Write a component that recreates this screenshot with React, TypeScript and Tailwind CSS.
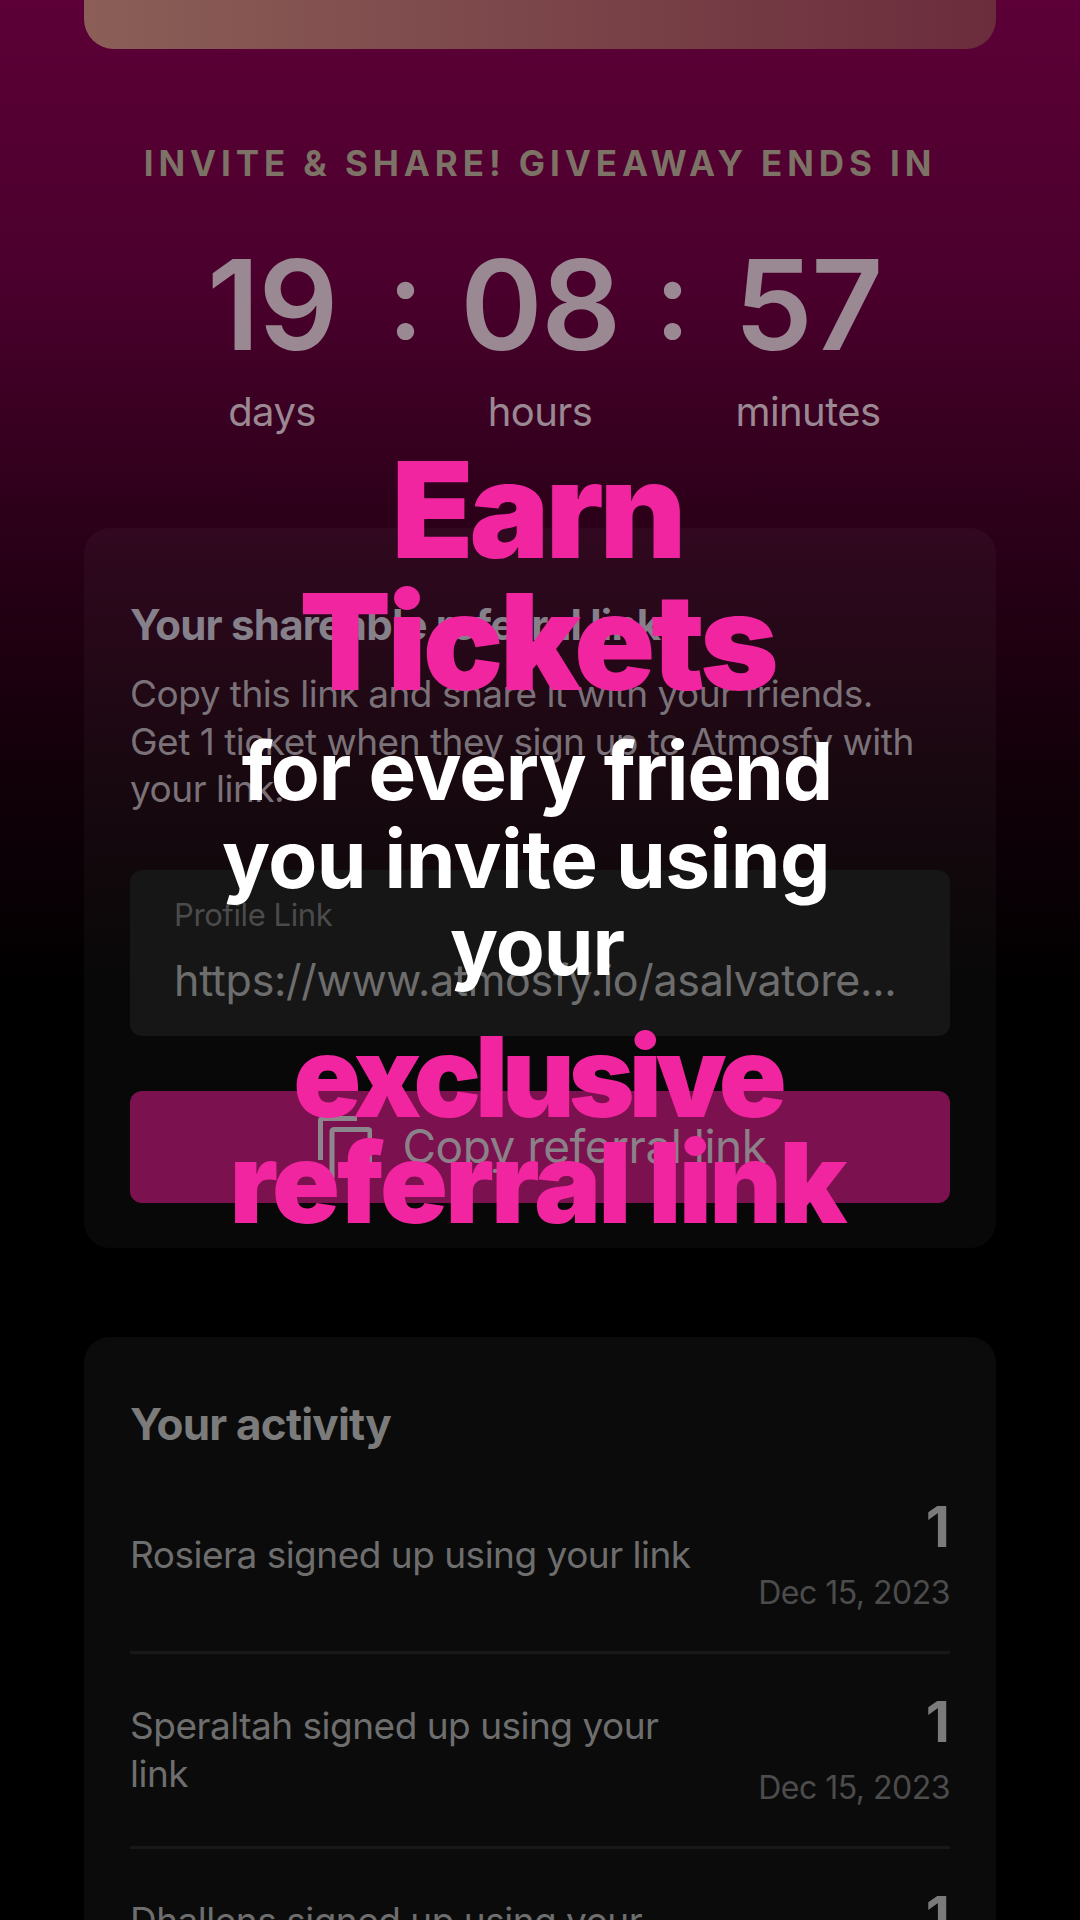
const activity = [
  { text: "Rosiera signed up using your link", date: "Dec 15, 2023" },
  { text: "Speraltah signed up using your link", date: "Dec 15, 2023" },
  { text: "Dhallens signed up using your link", date: "Dec 15, 2023" },
];

function Count({ value, label }: { value: string; label: string }) {
  return (
    <div className="flex w-[268px] flex-col items-center">
      <span className="h-[150px] text-[125px] leading-[150px] font-semibold tracking-[-1.5px] text-[#9a8893]">{value}</span>
      <span className="mt-[9px] text-[40px] leading-[46px] tracking-[-0.6px] text-[#9a8893]">{label}</span>
    </div>
  );
}

function CopyIcon() {
  return (
    <svg width="54" height="62" viewBox="0 0 54 62" fill="none" stroke="#8b878c" strokeWidth="5">
      <path d="M2.5 44V4.5a2 2 0 0 1 2-2H39" />
      <path d="M14 62V15.5a2 2 0 0 1 2-2h34a2 2 0 0 1 2 2V62" />
    </svg>
  );
}

export default function App() {
  return (
    <div className="relative h-[1920px] w-[1080px] overflow-hidden bg-[linear-gradient(180deg,#5c0037_0%,#4a002c_15%,#2c0019_27%,#120009_40%,#000000_52%)] font-['Inter',sans-serif]">
      <div className="mx-[84px] h-[49px] rounded-b-[30px] bg-[linear-gradient(90deg,#8b5f57,#6b2c3c)]" />

      <div className="mt-[94px] text-center text-[35px] leading-[40px] font-bold tracking-[4.9px] text-[#7d7266]">INVITE &amp; SHARE! GIVEAWAY ENDS IN</div>

      <div className="relative mx-auto mt-[47px] flex w-[804px] justify-center">
        <Count value="19" label="days" />
        <Count value="08" label="hours" />
        <Count value="57" label="minutes" />
        <span className="absolute top-[-6px] left-[250px] text-[110px] leading-[150px] font-semibold text-[#9a8893]">:</span>
        <span className="absolute top-[-6px] left-[517px] text-[110px] leading-[150px] font-semibold text-[#9a8893]">:</span>
      </div>

      <section className="mx-[84px] mt-[93px] h-[720px] rounded-[26px] bg-[#ffffff08] px-[46px] pt-[72px]">
        <h2 className="text-[42px] leading-[50px] font-bold tracking-[-0.8px] text-[#85808a]">Your shareable referral link</h2>
        <p className="mt-[20px] text-[37px] leading-[47.5px] tracking-[-0.5px] text-[#7a7278]">Copy this link and share it with your friends.<br />Get 1 ticket when they sign up to Atmosfy with your link.</p>
        <div className="mt-[57px] h-[166px] rounded-[12px] bg-[#161616] px-[44px] pt-[27px]">
          <div className="text-[31px] leading-[36px] tracking-[-0.4px] text-[#4b4b4b]">Profile Link</div>
          <div className="mt-[19px] truncate text-[43px] leading-[56px] tracking-[-0.3px] text-[#6d6d6d]">https://www.atmosfy.io/asalvatore...</div>
        </div>
        <button className="mt-[55px] flex h-[112px] w-full items-center justify-center gap-[30px] rounded-[12px] bg-[#7c114f] pl-[5px] text-[46px] tracking-[-0.5px] text-[#8b8189]">
          <CopyIcon />
          Copy referral link
        </button>
      </section>

      <section className="mx-[84px] mt-[89px] h-[700px] rounded-[26px] bg-[#0b0b0b] px-[46px] pt-[62px]">
        <h2 className="text-[44px] leading-[50px] font-bold tracking-[-0.8px] text-[#7b7b7b]">Your activity</h2>
        <div className="mt-[10px] flex flex-col">
          {activity.map((row) => (
            <div key={row.text} className="flex h-[195px] items-center justify-between border-b-[3px] border-[#181818]">
              <p className="w-[570px] text-[37px] leading-[48px] tracking-[-0.5px] text-[#6e6e6e]">{row.text}</p>
              <div className="flex flex-col items-end">
                <span className="text-[56px] leading-[62px] font-bold text-[#7b7b7b]">1</span>
                <span className="mt-[13px] text-[32px] leading-[44px] tracking-[-0.5px] text-[#4c4c4c]">{row.date}</span>
              </div>
            </div>
          ))}
        </div>
      </section>

      <div className="absolute top-[443px] left-0 flex w-[1074px] flex-col items-center text-center">
        <div className="text-[134px] leading-[132px] font-black tracking-[-4px] text-[#f0259f]">Earn<br />Tickets</div>
        <div className="mt-[20px] text-[80px] leading-[87.5px] font-bold tracking-[-1px] text-white">
          <div>for every friend</div>
          <div className="pr-[22px] tracking-[-0.5px]">you invite using</div>
          <div>your</div>
        </div>
        <div className="mt-[33px] text-[112px] leading-[106px] font-black text-[#f0259f]">
          <div className="tracking-[-6px]">exclusive</div>
          <div className="tracking-[-2.7px]">referral link</div>
        </div>
      </div>
    </div>
  );
}
